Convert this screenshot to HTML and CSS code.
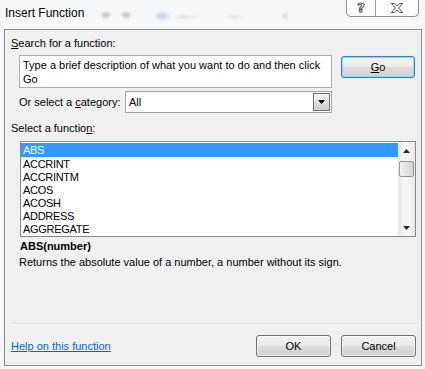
FILE: index.html
```html
<!DOCTYPE html>
<html>
<head>
<meta charset="utf-8">
<link rel="stylesheet" href="styles.css">
</head>
<body>
<div class="win">
  <div class="titlebar">
    <span class="title">Insert Function</span>
    <div class="caption-btns">
      <span class="cb cb-help">?</span>
      <span class="cb cb-close">
        <svg width="14" height="12" viewBox="0 0 14 12"><path d="M1.5 1.5 H4.5 L7 4.2 L9.5 1.5 H12.5 L8.6 6 L12.5 10.5 H9.5 L7 7.8 L4.5 10.5 H1.5 L5.4 6 Z" fill="#fff" stroke="#555" stroke-width="1" stroke-linejoin="round"/></svg>
      </span>
    </div>
  </div>
  <div class="panel">
    <div class="lbl search-lbl"><u>S</u>earch for a function:</div>
    <div class="search-row">
      <div class="textarea">Type a brief description of what you want to do and then click<br>Go</div>
      <div class="btn btn-go"><u>G</u>o</div>
    </div>
    <div class="cat-row">
      <span class="cat-lbl">Or select a <u>c</u>ategory:</span>
      <div class="select">
        <span class="select-val">All</span>
        <span class="drop"><svg width="7" height="4" viewBox="0 0 7 4"><path d="M0 0 H7 L3.5 4 Z" fill="#000"/></svg></span>
      </div>
    </div>
    <div class="lbl fn-lbl">Select a functio<u>n</u>:</div>
    <div class="listbox">
      <ul class="items">
        <li class="sel">ABS</li>
        <li>ACCRINT</li>
        <li>ACCRINTM</li>
        <li>ACOS</li>
        <li>ACOSH</li>
        <li>ADDRESS</li>
        <li>AGGREGATE</li>
      </ul>
      <div class="scrollbar">
        <span class="arrow"><svg width="7" height="4" viewBox="0 0 7 4"><path d="M0 4 H7 L3.5 0 Z" fill="#222"/></svg></span>
        <div class="track"><div class="thumb"></div></div>
        <span class="arrow"><svg width="7" height="4" viewBox="0 0 7 4"><path d="M0 0 H7 L3.5 4 Z" fill="#222"/></svg></span>
      </div>
    </div>
    <div class="sig">ABS(number)</div>
    <div class="desc">Returns the absolute value of a number, a number without its sign.</div>
    <div class="sep"></div>
    <div class="footer">
      <a class="help-link" href="#">Help on this function</a>
      <div class="btns">
        <div class="btn btn-ok">OK</div>
        <div class="btn btn-cancel">Cancel</div>
      </div>
    </div>
  </div>
</div>
</body>
</html>
```

FILE: styles.css
```css
html, body {
  margin: 0;
  padding: 0;
}
body {
  width: 425px;
  height: 369px;
  overflow: hidden;
  font-family: "Liberation Sans", Arial, sans-serif;
  font-size: 11px;
  color: #000;
}
.win {
  width: 425px;
  height: 369px;
  display: flex;
  flex-direction: column;
  background:
    radial-gradient(ellipse 6px 5px at 106px 15px, rgba(120,120,120,0.45), rgba(120,120,120,0) 100%),
    radial-gradient(ellipse 6px 5px at 126px 15px, rgba(120,120,120,0.45), rgba(120,120,120,0) 100%),
    radial-gradient(ellipse 9px 6px at 162px 16px, rgba(90,120,200,0.35), rgba(90,120,200,0) 100%),
    radial-gradient(ellipse 14px 3px at 185px 17px, rgba(120,120,120,0.18), rgba(120,120,120,0) 100%),
    radial-gradient(ellipse 10px 3px at 235px 17px, rgba(120,120,120,0.15), rgba(120,120,120,0) 100%),
    radial-gradient(ellipse 4px 5px at 285px 16px, rgba(120,120,120,0.2), rgba(120,120,120,0) 100%),
    #f6f7f8;
}
.titlebar {
  height: 29px;
  display: flex;
  align-items: flex-start;
  justify-content: space-between;
  flex: none;
}
.title {
  font-size: 12px;
  margin: 6px 0 0 5px;
  line-height: 14px;
  color: #000;
}
.caption-btns {
  display: flex;
  margin-right: 6px;
  height: 16px;
  border: 1px solid #8d8d8d;
  border-top: none;
  border-radius: 0 0 5px 5px;
  background: rgba(255,255,255,0.75);
}
.cb {
  display: flex;
  align-items: center;
  justify-content: center;
  height: 16px;
}
.cb-help {
  width: 28px;
  border-right: 1px solid #9a9a9a;
  font-family: "DejaVu Sans", sans-serif;
  font-weight: bold;
  font-size: 13px;
  color: #fff;
  -webkit-text-stroke: 1px #555;
  line-height: 16px;
}
.cb-close {
  width: 42px;
}
.panel {
  margin: 0 3px 3px 4px;
  flex: 1;
  border: 1px solid #8e8f8f;
  background: #f0f0f0;
  display: flex;
  flex-direction: column;
  padding-top: 6px;
}
.lbl {
  line-height: 14px;
  padding-left: 6px;
}
.search-row {
  display: flex;
  margin-top: 5px;
  margin-left: 14px;
}
.textarea {
  box-sizing: border-box;
  width: 313px;
  height: 33px;
  border: 1px solid #abadb3;
  background: #fff;
  padding: 2px 3px;
  line-height: 14px;
}
.btn {
  box-sizing: border-box;
  width: 75px;
  height: 22px;
  border: 1px solid #707070;
  border-radius: 3px;
  background: linear-gradient(#f2f2f2 0%, #ebebeb 50%, #dddddd 50%, #cfcfcf 100%);
  display: flex;
  align-items: center;
  justify-content: center;
  box-shadow: inset 0 0 0 1px rgba(255,255,255,0.6);
}
.btn-go {
  margin: 1px 0 0 9px;
  width: 74px;
  border-color: #3c7fb1;
  box-shadow: inset 0 0 0 1px #7fdcfb, 0 0 1px 0 #9fd8f5;
  background: linear-gradient(#f3f3f3 0%, #ececec 50%, #dedede 50%, #d2d2d2 100%);
}
.cat-row {
  display: flex;
  align-items: center;
  margin-top: 3px;
  padding-left: 14px;
}
.cat-lbl {
  width: 106px;
}
.select {
  box-sizing: border-box;
  width: 207px;
  height: 22px;
  border: 1px solid #a5a5a5;
  background: #fff;
  display: flex;
  align-items: center;
  justify-content: space-between;
  padding-left: 3px;
}
.drop {
  box-sizing: border-box;
  width: 17px;
  height: 18px;
  margin-right: 1px;
  border: 1px solid #6f6f6f;
  background: linear-gradient(#f2f2f2 0%, #ebebeb 50%, #dddddd 50%, #cfcfcf 100%);
  display: flex;
  align-items: center;
  justify-content: center;
}
.fn-lbl {
  margin-top: 8px;
}
.listbox {
  box-sizing: border-box;
  margin: 6px 0 0 15px;
  width: 396px;
  height: 96px;
  border: 1px solid #828790;
  background: #fff;
  display: flex;
}
.items {
  list-style: none;
  margin: 0;
  padding: 1px 0 0 0;
  flex: 1;
}
.items li {
  height: 13px;
  line-height: 15px;
  overflow: hidden;
  padding-left: 2px;
  letter-spacing: -0.3px;
}
.items li.sel {
  height: 14px;
  background: #3399ff;
  color: #fff;
}
.scrollbar {
  width: 17px;
  display: flex;
  flex-direction: column;
  background: linear-gradient(90deg, #e6e6e6, #f4f4f4 30%, #f4f4f4 70%, #e9e9e9);
}
.arrow {
  height: 17px;
  display: flex;
  align-items: center;
  justify-content: center;
  flex: none;
}
.track {
  flex: 1;
  padding-top: 2px;
}
.thumb {
  box-sizing: border-box;
  margin: 0 1px;
  height: 16px;
  border: 1px solid #979797;
  border-radius: 2px;
  background: linear-gradient(90deg, #f1f1f1, #e3e3e3 50%, #d5d5d5);
}
.sig {
  margin-top: 2px;
  padding-left: 15px;
  font-weight: bold;
  line-height: 14px;
}
.desc {
  margin-top: 2px;
  padding-left: 14px;
  line-height: 14px;
}
.sep {
  margin: auto 4px 0 6px;
  height: 1px;
  background: #dcdcdc;
  border-bottom: 1px solid #fafafa;
}
.footer {
  display: flex;
  justify-content: space-between;
  align-items: center;
  margin: 10px 5px 8px 6px;
}
.help-link {
  color: #0066cc;
  text-decoration: underline;
}
.btns {
  display: flex;
  gap: 10px;
}
```
